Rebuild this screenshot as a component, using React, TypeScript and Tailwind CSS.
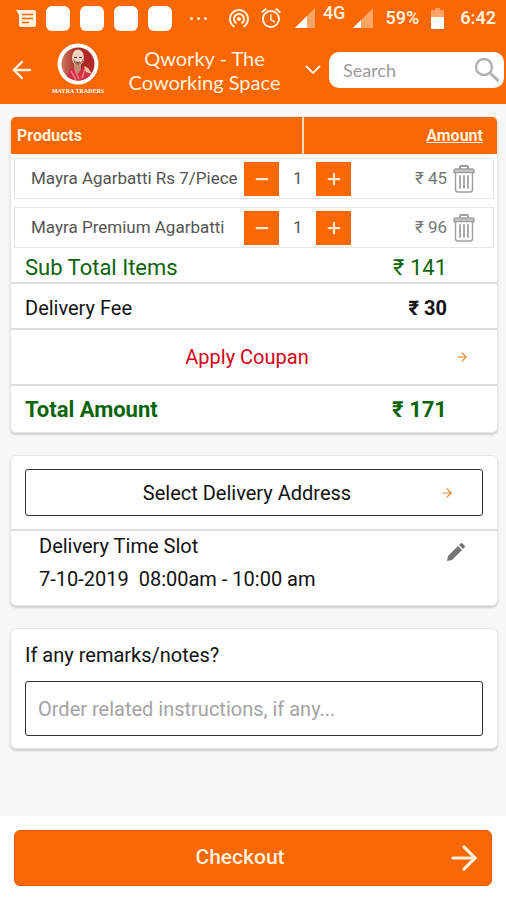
import { useState } from 'react';
import type React from 'react';
import { ArrowLeft, ArrowRight, Minus, Plus } from 'lucide-react';
import { MdAlarm, MdWifiTethering } from 'react-icons/md';

type CartItem = {
  id: string;
  name: string;
  price: number;
  qty: number;
};

const initialItems: CartItem[] = [
  { id: 'agarbatti', name: 'Mayra Agarbatti Rs 7/Piece', price: 45, qty: 1 },
  { id: 'premium', name: 'Mayra Premium Agarbatti', price: 96, qty: 1 },
];

const DELIVERY_FEE = 30;

function MessageIcon() {
  return (
    <svg viewBox="0 0 20 17" className="h-[17px] w-5" aria-hidden="true">
      <path d="M0 0h18a2 2 0 0 1 2 2v13a2 2 0 0 1-2 2H5a2 2 0 0 1-2-2V5z" fill="#fff1dc" />
      <path d="M6 4.500h11M6 8.500h11M6 12.500h7" stroke="#fa6705" strokeWidth="1.700" />
    </svg>
  );
}

function SignalIcon({ level }: { level: number }) {
  return (
    <svg viewBox="0 0 20 20" className="h-5 w-5" aria-hidden="true">
      <path d="M20 0v20H0z" fill="#fda467" />
      <path d={`M0 20h${level}V${20 - level}z`} fill="#fff" />
    </svg>
  );
}

function BatteryIcon() {
  return (
    <svg viewBox="0 0 13 21" className="h-[21px] w-[13px]" aria-hidden="true">
      <path d="M4 0h5v2h3a1 1 0 0 1 1 1v6H0V3a1 1 0 0 1 1-1h3z" fill="#fda467" />
      <path d="M0 9h13v11a1 1 0 0 1-1 1H1a1 1 0 0 1-1-1z" fill="#fff" />
    </svg>
  );
}

function TrashIcon() {
  return (
    <svg viewBox="0 0 22 28" className="h-7 w-[22px]" fill="none" stroke="#a0a0a0" aria-hidden="true">
      <path d="M7 4V2q0-1 1-1h6q1 0 1 1v2" strokeWidth="2" />
      <path d="M1 7.500V6q0-2 2-2h16q2 0 2 2v1.500z" fill="#c4c4c4" strokeWidth="1.500" />
      <path d="M2.500 8v16.500q0 2.500 2.500 2.500h12q2.500 0 2.500-2.500V8" strokeWidth="1.500" />
      <path d="M7 11v12M11 11v12M15 11v12" strokeWidth="1.800" strokeLinecap="round" />
    </svg>
  );
}

function PencilIcon() {
  return (
    <svg viewBox="0 0 18 18" className="h-[18px] w-[18px]" fill="#757575" aria-hidden="true">
      <path d="M0 18l1-5L11 3l4 4L5 17z" />
      <path d="M12 2l1.500-1.500q1-.8 2 0l2 2q.8 1 0 2L16 6z" />
    </svg>
  );
}

function SearchIcon() {
  return (
    <svg viewBox="0 0 26 26" className="h-[26px] w-[26px]" fill="none" stroke="#b0b0b0" aria-hidden="true">
      <circle cx="10" cy="10" r="8" strokeWidth="2.400" />
      <path d="M15.500 15.500l9 8.500" strokeWidth="3" />
    </svg>
  );
}

function StoreAvatar() {
  return (
    <svg viewBox="0 0 42 42" className="h-[42px] w-[42px]" aria-hidden="true">
      <defs>
        <clipPath id="portrait">
          <circle cx="21" cy="21" r="16.500" />
        </clipPath>
        <linearGradient id="backdrop">
          <stop offset="0" stopColor="#d98a6c" />
          <stop offset="0.500" stopColor="#a62a25" />
          <stop offset="1" stopColor="#b8292c" />
        </linearGradient>
      </defs>
      <circle cx="21" cy="21" r="20.500" fill="#fff" />
      <g clipPath="url(#portrait)">
        <rect width="42" height="42" fill="url(#backdrop)" />
        <path d="M8 38l5-12 6-3 4 4 5-3 6 5 3 11z" fill="#d2304a" />
        <path d="M17 20h7v6l-3 5-4-5z" fill="#c08a6e" />
        <ellipse cx="21" cy="14.500" rx="6" ry="8" fill="#f0d3c0" />
        <path d="M16 16q2 8 6 6 5-2 4.500-8-1 5-4 5.500t-6.500-3.500z" fill="#a5705c" />
        <path d="M17 14.500h3M22 14.500h3" stroke="#5c342c" strokeWidth="1.200" />
        <path d="M19 19q2 1 4 0" stroke="#7a3f34" strokeWidth="1" fill="none" />
        <path d="M14 28l5 9M18 27l4 9M28 26l-3 9" stroke="#f27e80" strokeWidth="1.500" />
        <path d="M27 23l4 2 4 6-6-2z" fill="#f0c3a8" />
      </g>
    </svg>
  );
}

function StatusBar() {
  return (
    <div className="flex h-9 items-center justify-between pl-4 pr-2.5 text-[#fff1dc]">
      <div className="flex items-center gap-2.5">
        <MessageIcon />
        {[0, 1, 2, 3].map(i => (
          <span key={i} className="h-[25px] w-6 rounded-md bg-white" />
        ))}
        <span className="ml-2 flex gap-1">
          {[0, 1, 2].map(i => (
            <span key={i} className="h-[3px] w-[3px] rounded-full bg-[#fff1dc]" />
          ))}
        </span>
      </div>
      <div className="flex items-center gap-3 text-lg font-medium">
        <span className="flex gap-2">
          <MdWifiTethering className="h-6 w-6" />
          <MdAlarm className="h-6 w-6" />
        </span>
        <span className="flex items-center gap-2">
          <SignalIcon level={12} />
          <span className="pb-2.5">4G</span>
          <SignalIcon level={8} />
        </span>
        <span className="font-semibold">59%</span>
        <BatteryIcon />
        <span className="ml-1 font-semibold">6:42</span>
      </div>
    </div>
  );
}

function Header() {
  return (
    <header className="bg-[#fa6705]">
      <StatusBar />
      <div className="flex h-[68px] items-center pl-2 pr-0.5">
        <button type="button" aria-label="Back" className="flex-none text-[#fff1dc]">
          <ArrowLeft size={28} strokeWidth={2} />
        </button>
        <div className="ml-4 flex w-[52px] flex-none flex-col items-center">
          <StoreAvatar />
          <span className="whitespace-nowrap font-['Liberation_Serif',serif] text-[6px] font-bold leading-3 text-white">
            MAYRA TRADERS
          </span>
        </div>
        <button type="button" className="flex min-w-0 flex-1 items-center font-['Lato',sans-serif] text-xl leading-6 text-[#fff1dc]">
          <span className="flex-1 px-4">Qworky - The Coworking Space</span>
          <svg viewBox="0 0 16 10" className="h-2.5 w-4 flex-none" fill="none" stroke="currentColor" strokeWidth="1.800" aria-hidden="true">
            <path d="M1 1l7 7 7-7" />
          </svg>
        </button>
        <label className="ml-2 flex h-9 w-[175px] flex-none items-center rounded-[10px] bg-white pl-3.5 pr-1">
          <input
            type="search"
            aria-label="Search"
            placeholder="Search"
            className="min-w-0 flex-1 font-['Lato',sans-serif] text-lg outline-none placeholder:text-[#9b9b9b]"
          />
          <SearchIcon />
        </label>
      </div>
    </header>
  );
}

function Card({ children }: { children: React.ReactNode }) {
  return (
    <section className="overflow-hidden rounded-md border border-[#e6e6e6] bg-white shadow-[0_2px_2px_#d0d0d0]">{children}</section>
  );
}

export default function App() {
  const [items, setItems] = useState(initialItems);
  const [remarks, setRemarks] = useState('');

  const subTotal = items.reduce((sum, item) => sum + item.price * item.qty, 0);

  const changeQty = (id: string, delta: number) => {
    setItems(current => current.map(item => (item.id === id ? { ...item, qty: Math.max(1, item.qty + delta) } : item)));
  };

  const removeItem = (id: string) => {
    setItems(current => current.filter(item => item.id !== id));
  };

  return (
    <div className="flex min-h-screen flex-col bg-[#f7f7f7] font-['Roboto',sans-serif] text-[#111]">
      <Header />

      <main className="flex flex-1 flex-col gap-[22px] py-3 pl-2.5 pr-2">
        <Card>
          <table className="w-full table-fixed border-collapse">
            <colgroup>
              <col className="w-[48%]" />
              <col className="w-[12%]" />
              <col className="w-[10%]" />
              <col />
            </colgroup>
            <thead>
              <tr className="h-[37px] bg-[#fa6705] text-base font-bold text-[#fff1dc]">
                <th colSpan={2} className="border-r-2 border-[#ffd9b8] pl-1.5 text-left">
                  Products
                </th>
                <th colSpan={2} className="pr-3.5 text-right underline">
                  Amount
                </th>
              </tr>
            </thead>
            <tbody>
              {items.map(item => (
                <tr key={item.id} className="text-[#555]">
                  <td className="py-1 pl-[3px]">
                    <div className="flex h-[41px] items-center whitespace-nowrap border-y border-l border-[#e6e6e6] pl-4 text-[17px]">
                      {item.name}
                    </div>
                  </td>
                  <td colSpan={2} className="py-1">
                    <div className="flex h-[41px] items-center justify-between border-y border-[#e6e6e6] text-[17px]">
                      <button
                        type="button"
                        aria-label={`Decrease ${item.name}`}
                        onClick={() => changeQty(item.id, -1)}
                        className="flex h-[34px] w-[35px] items-center justify-center bg-[#fa6705] text-[#ffe6c9]"
                      >
                        <Minus size={18} strokeWidth={3} />
                      </button>
                      {item.qty}
                      <button
                        type="button"
                        aria-label={`Increase ${item.name}`}
                        onClick={() => changeQty(item.id, 1)}
                        className="flex h-[34px] w-[35px] items-center justify-center bg-[#fa6705] text-[#ffe6c9]"
                      >
                        <Plus size={18} strokeWidth={3} />
                      </button>
                    </div>
                  </td>
                  <td className="py-1 pr-[3px]">
                    <div className="flex h-[41px] items-center justify-end gap-1.5 border-y border-r border-[#e6e6e6] pr-[18px] text-[17px] text-[#777]">
                      ₹ {item.price * item.qty}
                      <button type="button" aria-label={`Remove ${item.name}`} onClick={() => removeItem(item.id)}>
                        <TrashIcon />
                      </button>
                    </div>
                  </td>
                </tr>
              ))}
            </tbody>
          </table>

          <dl>
            <div className="flex h-8 items-center justify-between border-b-2 border-[#dedede] pl-3.5 pr-[50px] text-[22px] text-[#0a640a]">
              <dt>Sub Total Items</dt>
              <dd>₹ {subTotal}</dd>
            </div>
            <div className="flex h-[46px] items-center justify-between border-b-2 border-[#dedede] pl-3.5 pr-[50px] pt-1 text-xl">
              <dt>Delivery Fee</dt>
              <dd className="font-bold">₹ {DELIVERY_FEE}</dd>
            </div>
          </dl>
          <button type="button" className="flex h-14 w-full items-center border-b-2 border-[#dedede] pl-7 pr-7 text-xl text-[#d6001c]">
            <span className="flex-1">Apply Coupan</span>
            <ArrowRight size={14} strokeWidth={2} className="text-[#e8842f]" />
          </button>
          <dl>
            <div className="flex h-[46px] items-center justify-between pl-3.5 pr-[50px] text-[22px] font-bold text-[#0a640a]">
              <dt>Total Amount</dt>
              <dd>₹ {subTotal + DELIVERY_FEE}</dd>
            </div>
          </dl>
        </Card>

        <Card>
          <div className="border-b-2 border-[#dedede] px-3.5 py-[13px]">
            <button type="button" className="flex h-[47px] w-full items-center rounded-[3px] border border-[#333] pl-7 pr-7 text-xl">
              <span className="flex-1">Select Delivery Address</span>
              <ArrowRight size={14} strokeWidth={2} className="text-[#e8842f]" />
            </button>
          </div>
          <div className="flex items-start justify-between pb-2 pl-7 pr-8">
            <div className="text-xl">
              <h2 className="leading-[30px]">Delivery Time Slot</h2>
              <p className="whitespace-pre leading-9">7-10-2019  08:00am - 10:00 am</p>
            </div>
            <button type="button" aria-label="Edit time slot" className="mt-3">
              <PencilIcon />
            </button>
          </div>
        </Card>

        <Card>
          <div className="px-3.5 pb-3 pt-2.5">
            <label htmlFor="remarks" className="block text-xl leading-8">
              If any remarks/notes?
            </label>
            <input
              id="remarks"
              value={remarks}
              onChange={event => setRemarks(event.target.value)}
              placeholder="Order related instructions, if any..."
              className="mt-2.5 h-[55px] w-full rounded-[3px] border border-[#333] px-3 text-xl outline-none placeholder:text-[#a3a3a3]"
            />
          </div>
        </Card>
      </main>

      <footer className="bg-white px-3.5 py-3.5">
        <button type="button" className="flex h-14 w-full items-center rounded-md border border-[#e65c00] bg-[#fa6705] pl-5 pr-2 text-[21px] font-medium text-[#fff1dc]">
          <span className="flex-1">Checkout</span>
          <ArrowRight size={38} strokeWidth={2} />
        </button>
      </footer>
    </div>
  );
}
